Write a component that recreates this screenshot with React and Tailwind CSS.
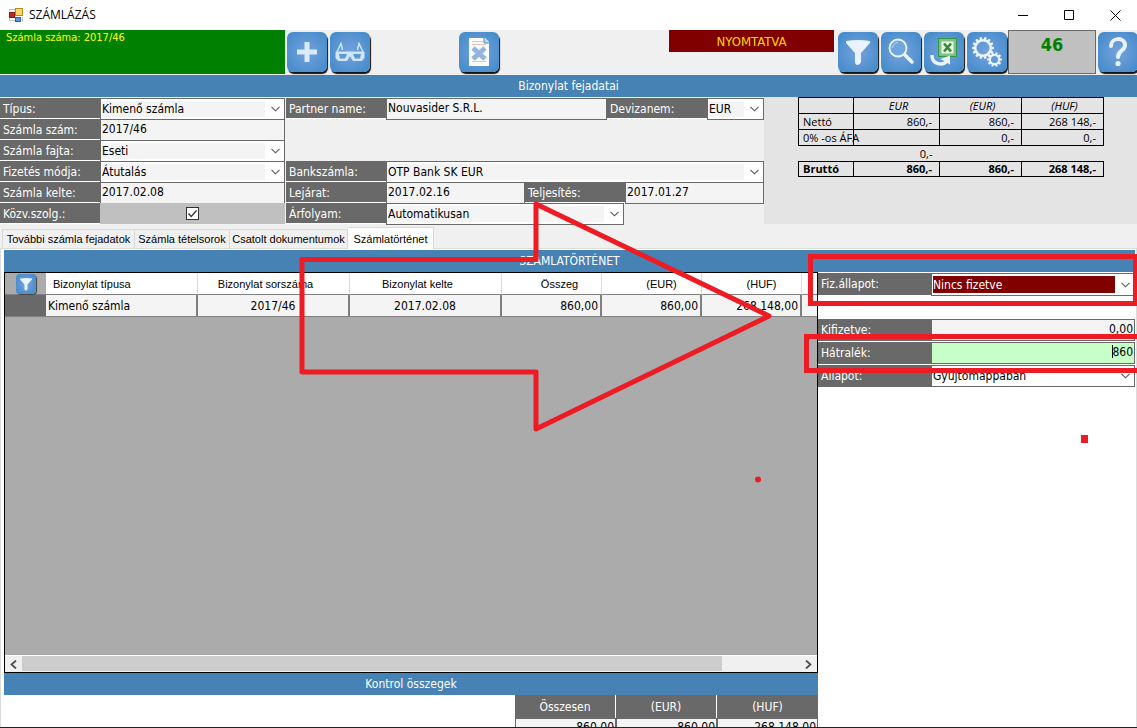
import React from "react";

const FIELD = "border-[#696969] bg-[#f4f4f4]";

function Chevron() {
  return (
    <svg className="pointer-events-none absolute right-1 top-1/2 -translate-y-1/2" width="9" height="6" viewBox="0 0 9 6" fill="none" aria-hidden="true">
      <path d="M0.5 0.8 L4.5 4.8 L8.5 0.8" stroke="#555" strokeWidth="1.1" />
    </svg>
  );
}

function Label({ htmlFor, className = "w-[100px]", children }) {
  return (
    <label htmlFor={htmlFor} className={`block shrink-0 overflow-hidden whitespace-nowrap bg-[#696969] pl-[3px] leading-[22px] text-white ${className}`}>
      {children}
    </label>
  );
}

function SelectField({ id, value, className = "", tone = "bg-[#f4f4f4] text-black" }) {
  return (
    <div className={`relative -mb-px border border-[#696969] bg-white ${className}`}>
      <select id={id} defaultValue={value} className={`block h-full w-full appearance-none bg-clip-content py-0.5 pl-px pr-[19px] leading-4 outline-none ${tone}`}>
        <option>{value}</option>
      </select>
      <Chevron />
    </div>
  );
}

function TextField({ id, value, className = "" }) {
  return <input id={id} type="text" defaultValue={value} className={`-mb-px min-w-0 rounded-none border pb-[3px] pl-px pr-px outline-none ${FIELD} ${className}`} />;
}

function Row({ children }) {
  return <div className="flex h-[21px] [&>label]:border-b [&>label]:border-white">{children}</div>;
}

function Strip({ children, className = "" }) {
  return <div className={`h-[22px] shrink-0 bg-[#4682b4] text-center leading-[23px] text-white ${className}`}>{children}</div>;
}

function IconButton({ label, children, className = "" }) {
  return (
    <button type="button" aria-label={label} className={`mt-0.5 flex h-10 w-10 shrink-0 items-center justify-center rounded-md bg-radial from-[#74a3dc] to-[#3f88c9] shadow-[1px_2px_1px_#111] ${className}`}>
      {children}
    </button>
  );
}

function FunnelIcon({ size = 28 }) {
  return (
    <svg width={size} height={size} viewBox="0 0 28 28" aria-hidden="true">
      <path d="M2 3 Q14 1 26 3 L26 5 L17 15 L17 24 Q16 27 14 27 Q11 27 11 24 L11 15 L2 5 Z" fill="#eaf3fd" />
    </svg>
  );
}

function gearPath(cx, cy, outer, inner, teeth) {
  const points = [];
  for (let i = 0; i < teeth; i++) {
    const a = (i / teeth) * Math.PI * 2;
    const w = Math.PI / teeth;
    [[a - w * 0.75, inner], [a - w * 0.4, outer], [a + w * 0.4, outer], [a + w * 0.75, inner]].forEach(([t, r]) => {
      points.push(`${(cx + Math.cos(t) * r).toFixed(2)},${(cy + Math.sin(t) * r).toFixed(2)}`);
    });
  }
  return `M${points.join("L")}Z`;
}

function Toolbar() {
  return (
    <div className="flex h-[45px] shrink-0 overflow-hidden bg-[#f0f0f0]">
      <div className="h-11 w-[285px] shrink-0 bg-[#008000] pl-1.5 text-[11px] leading-[15px] text-[#ffff00]">Számla száma: 2017/46</div>
      <div className="ml-0.5 flex gap-[3px]">
        <IconButton label="Új számla">
          <svg width="22" height="22" viewBox="0 0 22 22" aria-hidden="true"><path d="M8.5 1h5v7.5H21v5h-7.5V21h-5v-7.5H1v-5h7.5z" fill="#d8eafc" /></svg>
        </IconButton>
        <IconButton label="Megtekintés">
          <svg width="30" height="20" viewBox="0 0 30 20" fill="none" stroke="#cfe5fb" aria-hidden="true">
            <path d="M1.5 11 L6 1.5 L7.5 8 M28.5 11 L24 1.5 L22.5 8" strokeWidth="1.5" />
            <path d="M1 10 H29 V16 L27 18.5 H18 L15.5 14 H14.5 L12 18.5 H3 L1 16 Z" fill="#cfe5fb" strokeWidth="1" />
            <path d="M4 12h8l-2 4.5H5z M18 12h8l-1 4.5h-5z" fill="#5c9ad6" stroke="none" />
          </svg>
        </IconButton>
      </div>
      <IconButton label="Bizonylat törlése" className="ml-[89px]">
        <svg width="22" height="28" viewBox="0 0 22 28" aria-hidden="true">
          <path d="M1 0h16l4 4v24H1z" fill="#fbfbfb" />
          <path d="M16 0v5h5" fill="#b8d4ef" stroke="#4c8cca" />
          <path d="M4 3.5h11M4 6.5h14M4 23.5h14" stroke="#e8c4bc" />
          <path d="M5 10 L17 21 M17 10 L5 21" stroke="#94b4e2" strokeWidth="5" />
        </svg>
      </IconButton>
      <div className="flex-1" />
      <div className="h-[22px] w-[165px] shrink-0 bg-[#800000] text-center text-[13px] leading-[24px] text-[#ffd700]">NYOMTATVA</div>
      <div className="ml-1 flex gap-[3px]">
        <IconButton label="Szűrés"><FunnelIcon /></IconButton>
        <IconButton label="Keresés">
          <svg width="30" height="30" viewBox="0 0 30 30" fill="none" aria-hidden="true">
            <path d="M18 17 L26 25" stroke="#eaf3fd" strokeWidth="3.5" strokeLinecap="round" />
            <circle cx="12" cy="11" r="8.5" fill="#6fa6de" stroke="#eaf3fd" strokeWidth="1.8" />
            <path d="M6.5 11a5.5 5.5 0 0 1 5.5-5.5" stroke="#bcd8f4" />
          </svg>
        </IconButton>
        <IconButton label="Excel export">
          <svg width="32" height="32" viewBox="0 0 32 32" aria-hidden="true">
            <rect x="10.5" y="2.5" width="18" height="18" fill="#7fb98f" stroke="#2e9a45" />
            <rect x="13" y="5" width="13" height="13" fill="#e6f3df" stroke="#8cc48f" />
            <path d="M16 7.5l7 8M23 7.5l-7 8" stroke="#2f8a3a" strokeWidth="2.6" />
            <path d="M4 19 C4 29 15 30 19 25" fill="none" stroke="#eaf3fd" strokeWidth="3.5" />
            <path d="M12.500 23l9.500-3.500v9z" fill="#eaf3fd" />
          </svg>
        </IconButton>
        <IconButton label="Beállítások">
          <svg width="32" height="32" viewBox="0 0 32 32" fill="#eaf3fd" fillRule="evenodd" aria-hidden="true">
            <path d={`${gearPath(12, 12, 11, 8.8, 14)} M12 5.5a6.5 6.5 0 1 0 0 13a6.5 6.5 0 1 0 0-13Z`} />
            <path d={`${gearPath(23.5, 23.5, 7.5, 5.5, 10)} M23.5 20a3.5 3.5 0 1 0 0 7a3.5 3.5 0 1 0 0-7Z`} />
          </svg>
        </IconButton>
      </div>
      <div className="ml-px h-11 w-[88px] shrink-0 border border-[#696969] bg-[#c0c0c0] text-center text-lg font-bold leading-[27px] text-[#008000]">46</div>
      <IconButton label="Súgó" className="-mr-px ml-0.5">
        <svg width="22" height="32" viewBox="0 0 22 32" fill="none" aria-hidden="true">
          <path d="M4 10 C4 1 18 1 18 9 C18 15 11 14 11 21" stroke="#eaf3fd" strokeWidth="4" strokeLinecap="round" />
          <circle cx="11" cy="27.5" r="2.6" fill="#eaf3fd" />
        </svg>
      </IconButton>
    </div>
  );
}

function Summary() {
  const head = "border border-black pl-1 font-normal";
  const cell = "border border-black pr-[7px] text-right";
  return (
    <table className="ml-[34px] w-[306px] table-fixed border-collapse self-start whitespace-nowrap font-['Open_Sans',sans-serif] text-[11px] leading-[15px] [&_th:first-child]:pl-1 [&_th:first-child]:text-left">
      <colgroup>
        <col className="w-[55px]" />
        <col className="w-[86px]" />
        <col className="w-[82px]" />
        <col />
      </colgroup>
      <thead>
        <tr className="italic">
          <th className={head} />
          <th className={head}>EUR</th>
          <th className={head}>(EUR)</th>
          <th className={head}>(HUF)</th>
        </tr>
      </thead>
      <tbody>
        <tr>
          <th className="border border-black p-0 font-normal">Nettó</th>
          <td className={cell}>860,-</td>
          <td className={cell}>860,-</td>
          <td className={cell}>268 148,-</td>
        </tr>
        <tr>
          <th className="border border-black p-0 font-normal">0% -os ÁFA</th>
          <td className={cell} />
          <td className={cell}>0,-</td>
          <td className={cell}>0,-</td>
        </tr>
        <tr>
          <td />
          <td className="pr-[7px] text-right">0,-</td>
          <td />
          <td />
        </tr>
        <tr className="font-bold leading-[14px]">
          <th className="border border-black p-0">Bruttó</th>
          <td className={cell}>860,-</td>
          <td className={cell}>860,-</td>
          <td className={cell}>268 148,-</td>
        </tr>
      </tbody>
    </table>
  );
}

function HeaderForm() {
  return (
    <div className="flex h-[128px] shrink-0 bg-[#f0f0f0]">
      <div className="w-[285px] shrink-0 pt-px">
        <Row><Label htmlFor="tipus">Típus:</Label><SelectField id="tipus" value="Kimenő számla" className="flex-1" /></Row>
        <Row><Label htmlFor="szam">Számla szám:</Label><TextField id="szam" value="2017/46" className="flex-1" /></Row>
        <Row><Label htmlFor="fajta">Számla fajta:</Label><SelectField id="fajta" value="Eseti" className="flex-1" /></Row>
        <Row><Label htmlFor="mod">Fizetés módja:</Label><SelectField id="mod" value="Átutalás" className="flex-1" /></Row>
        <Row><Label htmlFor="kelte">Számla kelte:</Label><TextField id="kelte" value="2017.02.08" className="flex-1" /></Row>
        <Row>
          <Label htmlFor="kozv">Közv.szolg.:</Label>
          <div className="flex flex-1 items-center justify-center bg-[#c0c0c0]">
            <span className="relative h-[13px] w-[13px]">
              <input id="kozv" type="checkbox" defaultChecked className="block h-[13px] w-[13px] appearance-none border border-[#333] bg-white" />
              <svg className="pointer-events-none absolute inset-0" width="13" height="13" viewBox="0 0 13 13" fill="none" aria-hidden="true"><path d="M2.5 6.5l2.7 3 5.3-6" stroke="#333" strokeWidth="1.3" /></svg>
            </span>
          </div>
        </Row>
      </div>
      <div className="ml-px w-[478px] shrink-0 pt-px">
        <Row>
          <Label htmlFor="partner">Partner name:</Label>
          <TextField id="partner" value="Nouvasider S.R.L." className="flex-1" />
          <Label htmlFor="deviza">Devizanem:</Label>
          <SelectField id="deviza" value="EUR" className="w-[57px]" />
        </Row>
        <div className="h-[42px]" />
        <Row><Label htmlFor="bank">Bankszámla:</Label><SelectField id="bank" value="OTP Bank SK EUR" className="flex-1" /></Row>
        <Row>
          <Label htmlFor="lejarat">Lejárat:</Label>
          <TextField id="lejarat" value="2017.02.16" className="w-[139px]" />
          <Label htmlFor="teljesites">Teljesítés:</Label>
          <TextField id="teljesites" value="2017.01.27" className="flex-1" />
        </Row>
        <Row><Label htmlFor="arfolyam">Árfolyam:</Label><SelectField id="arfolyam" value="Automatikusan" className="w-[238px]" /></Row>
      </div>
      <div className="flex h-[127px] flex-1 bg-[#e4e4e4]"><Summary /></div>
    </div>
  );
}

function Tabs() {
  const tab = "h-[19px] whitespace-nowrap border-r border-t border-[#d9d9d9] text-center leading-[19px]";
  return (
    <div role="tablist" className="flex h-6 shrink-0 items-end border-b border-[#dcdcdc] bg-[#f0f0f0] pl-0.5 font-['Liberation_Sans',sans-serif] text-[11px]">
      <button type="button" role="tab" aria-selected="false" className={`${tab} w-[133px] border-l`}>További számla fejadatok</button>
      <button type="button" role="tab" aria-selected="false" className={`${tab} w-[95px]`}>Számla tételsorok</button>
      <button type="button" role="tab" aria-selected="false" className={`${tab} w-[118px]`}>Csatolt dokumentumok</button>
      <button type="button" role="tab" aria-selected="true" className="-mb-px h-[22px] w-[86px] whitespace-nowrap border-r border-t border-[#d9d9d9] bg-white text-center leading-[18px]">Számlatörténet</button>
    </div>
  );
}

function HistoryTable() {
  const head = "border-r border-[#dcdcdc] bg-white font-normal";
  const cell = "border-r-2 border-[#808080] bg-[#f4f4f4] px-0.5";
  return (
    <table className="w-full table-fixed border-separate border-spacing-0 overflow-hidden whitespace-nowrap">
      <colgroup>
        <col className="w-[41px]" />
        <col className="w-[152px]" />
        <col className="w-[152px]" />
        <col className="w-[152px]" />
        <col className="w-[100px]" />
        <col className="w-[100px]" />
        <col className="w-[100px]" />
        <col />
      </colgroup>
      <thead>
        <tr className="h-[22px] font-['Liberation_Sans',sans-serif] text-[11px] [&>th]:border-b [&>th]:border-b-[#808080]">
          <th className="p-0">
            <button type="button" aria-label="Szűrő" className="mx-auto flex h-5 w-5 items-center justify-center rounded-sm bg-radial from-[#74a3dc] to-[#3f88c9] shadow-[1px_1px_1px_#444]"><FunnelIcon size={14} /></button>
          </th>
          <th className={`${head} pl-[7px] text-left`}>Bizonylat típusa</th>
          <th className={`${head} pr-4`}>Bizonylat sorszáma</th>
          <th className={`${head} pr-4`}>Bizonylat kelte</th>
          <th className={`${head} pl-4`}>Összeg</th>
          <th className={`${head} pl-5`}>(EUR)</th>
          <th className={`${head} pl-5`}>(HUF)</th>
          <th className="bg-white" />
        </tr>
      </thead>
      <tbody>
        <tr className="h-[22px] [&>td]:border-b [&>td]:border-b-[#808080]">
          <td className="bg-[#696969]" />
          <td className={cell}>Kimenő számla</td>
          <td className={`${cell} text-center`}>2017/46</td>
          <td className={`${cell} text-center`}>2017.02.08</td>
          <td className={`${cell} text-right`}>860,00</td>
          <td className={`${cell} text-right`}>860,00</td>
          <td className={`${cell} text-right`}>268 148,00</td>
          <td className="bg-[#f4f4f4]" />
        </tr>
      </tbody>
    </table>
  );
}

function HistoryPanel() {
  const head = "w-[101px] border-r border-white bg-[#696969] font-normal text-white last:border-r-0";
  const cell = "border border-b-0 border-[#696969] bg-[#f4f4f4] pr-px text-right";
  return (
    <div className="flex min-w-0 flex-1 flex-col">
      <div className="flex min-h-0 flex-1 flex-col border border-black bg-[#ababab]">
        <HistoryTable />
        <div className="flex-1" />
        <div className="flex h-[17px] items-center border-t border-white bg-[#f0f0f0]">
          <button type="button" aria-label="Balra" className="flex w-[17px] justify-center">
            <svg width="7" height="9" viewBox="0 0 7 9" fill="none" aria-hidden="true"><path d="M6 0.5L1.5 4.5 6 8.5" stroke="#505050" strokeWidth="1.8" /></svg>
          </button>
          <div className="flex h-full flex-1"><div className="h-[15px] w-[90%] bg-[#cdcdcd]" /></div>
          <button type="button" aria-label="Jobbra" className="flex w-[17px] justify-center">
            <svg width="7" height="9" viewBox="0 0 7 9" fill="none" aria-hidden="true"><path d="M1 0.5L5.5 4.5 1 8.5" stroke="#505050" strokeWidth="1.8" /></svg>
          </button>
        </div>
      </div>
      <Strip>Kontrol összegek</Strip>
      <div className="flex h-8 shrink-0 justify-end overflow-hidden">
        <table className="table-fixed border-separate border-spacing-0 self-start">
          <thead>
            <tr className="h-[23px]"><th className={head}>Összesen</th><th className={head}>(EUR)</th><th className={head}>(HUF)</th></tr>
          </thead>
          <tbody>
            <tr><td className={cell}>860,00</td><td className={cell}>860,00</td><td className={cell}>268 148,00</td></tr>
          </tbody>
        </table>
      </div>
    </div>
  );
}

function StatusPanel() {
  const label = "w-[113px]";
  return (
    <div className="w-[318px] shrink-0 pr-px pt-px">
      <div className="flex h-[22px]"><Label htmlFor="fiz" className={label}>Fiz.állapot:</Label><SelectField id="fiz" value="Nincs fizetve" className="flex-1" tone="bg-[#800000] text-white" /></div>
      <div className="mt-6 flex flex-col gap-px">
        <div className="flex h-[22px]"><Label htmlFor="kifizetve" className={label}>Kifizetve:</Label><TextField id="kifizetve" value="0,00" className="mb-0 flex-1 text-right" /></div>
        <div className="flex h-[22px]">
          <Label htmlFor="hatralek" className={label}>Hátralék:</Label>
          <input id="hatralek" type="text" defaultValue="860" className="min-w-0 flex-1 rounded-none border border-[#696969] bg-[#c8ffc8] pb-[3px] pr-px text-right outline-none" />
        </div>
        <div className="flex h-[22px]"><Label htmlFor="allapot" className={label}>Állapot:</Label><SelectField id="allapot" value="Gyűjtőmappában" className="mb-0 flex-1" tone="bg-white text-black" /></div>
      </div>
    </div>
  );
}

function Annotations() {
  return (
    <svg className="pointer-events-none absolute left-0 top-0" width="1137" height="728" viewBox="0 0 1137 728" fill="none" stroke="#ed1c24" strokeWidth="5" aria-hidden="true">
      <path d="M302 259.5H536V204L769 316L536 429V372H302Z" strokeLinejoin="round" />
      <path d="M810.5 256.5H1135.5V303.5H810.5Z" />
      <path d="M1140 336.5H806.5V370.5H1140" />
      <path d="M1112.5 345V358" stroke="#000" strokeWidth="1" />
      <circle cx="758" cy="479.5" r="3" fill="#ed1c24" stroke="none" />
      <rect x="1081" y="435" width="7" height="8" fill="#ed1c24" stroke="none" />
    </svg>
  );
}

export default function App() {
  return (
    <div className="relative flex h-screen flex-col overflow-hidden border-b border-[#222] bg-white font-['DejaVu_Sans_Condensed','DejaVu_Sans',sans-serif] text-[12px] leading-4 text-black">
      <header className="flex h-[30px] shrink-0 items-center pl-[9px] font-['Open_Sans',sans-serif]">
        <svg width="14" height="14" viewBox="0 0 14 14" aria-hidden="true">
          <rect x="0.5" y="4.5" width="5" height="5" fill="#c0281c" stroke="#8c1a12" />
          <rect x="6.5" y="0.5" width="7" height="7" fill="#fbd766" stroke="#b98a1a" />
          <rect x="6.5" y="9.5" width="5" height="4" fill="#5c95e6" stroke="#2c62b8" />
          <path d="M0.5 10v2.5H6M0.5 3V1.5H6M13.5 9v4.5" stroke="#bbb" fill="none" />
        </svg>
        <h1 className="ml-1.5 flex-1">SZÁMLÁZÁS</h1>
        <div className="flex gap-[35px] pr-4">
          <button type="button" aria-label="Kis méret"><svg width="11" height="11" viewBox="0 0 11 11"><path d="M0 5.5h10" stroke="#000" /></svg></button>
          <button type="button" aria-label="Teljes méret"><svg width="11" height="11" viewBox="0 0 11 11"><path d="M0.5 0.5h9v9h-9z" fill="none" stroke="#000" /></svg></button>
          <button type="button" aria-label="Bezárás"><svg width="11" height="11" viewBox="0 0 11 11"><path d="M0.5 0.5l10 10M10.5 0.5l-10 10" stroke="#000" /></svg></button>
        </div>
      </header>
      <Toolbar />
      <Strip>Bizonylat fejadatai</Strip>
      <HeaderForm />
      <Tabs />
      <main className="flex min-h-0 flex-1 flex-col border-x border-[#dcdcdc] pl-[3px] pt-px">
        <Strip className="mr-px">SZÁMLATÖRTÉNET</Strip>
        <div className="flex min-h-0 flex-1">
          <HistoryPanel />
          <StatusPanel />
        </div>
      </main>
      <Annotations />
    </div>
  );
}
